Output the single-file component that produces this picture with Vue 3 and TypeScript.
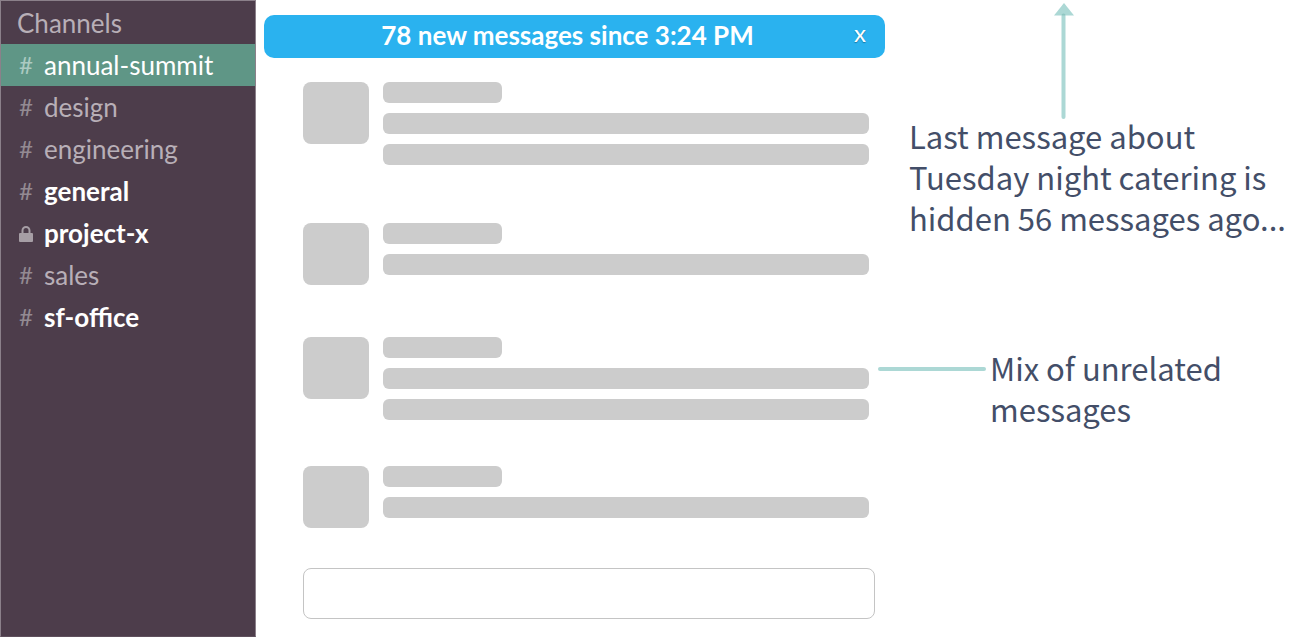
<script setup lang="ts">
import { ref } from 'vue'

interface Channel {
  name: string
  locked?: boolean
  unread?: boolean
}

interface Message {
  id: number
  lines: number
}

const channels: Channel[] = [
  { name: 'annual-summit' },
  { name: 'design' },
  { name: 'engineering' },
  { name: 'general', unread: true },
  { name: 'project-x', unread: true, locked: true },
  { name: 'sales' },
  { name: 'sf-office', unread: true },
]

const messages: Message[] = [
  { id: 1, lines: 2 },
  { id: 2, lines: 1 },
  { id: 3, lines: 2 },
  { id: 4, lines: 1 },
]

const active = ref('annual-summit')
const bannerOpen = ref(true)
const draft = ref('')
</script>

<template>
  <div class="page">
    <nav class="sidebar" aria-labelledby="channels-title">
      <h2 id="channels-title" class="title">Channels</h2>
      <ul class="channels">
        <li v-for="channel in channels" :key="channel.name">
          <a
            :href="'#' + channel.name"
            class="channel"
            :class="{ active: channel.name === active, unread: channel.unread }"
            @click="active = channel.name"
          >
            <svg v-if="channel.locked" class="lock" viewBox="0 0 14 18" aria-hidden="true">
              <path d="M3.5 10V6.5a3.5 3.5 0 0 1 7 0V10" fill="none" stroke="currentColor" stroke-width="2" />
              <rect x="0" y="9" width="14" height="9" rx="1" fill="currentColor" />
            </svg>
            <span v-else class="hash">#</span>
            <span class="name">{{ channel.name }}</span>
          </a>
        </li>
      </ul>
    </nav>

    <main class="conversation">
      <div class="banner" :class="{ closed: !bannerOpen }">
        <span class="banner-text">78 new messages since 3:24 PM</span>
        <button class="close" type="button" aria-label="Dismiss" @click="bannerOpen = false">x</button>
      </div>

      <div class="messages">
        <article v-for="message in messages" :key="message.id" class="message">
          <div class="avatar"></div>
          <div class="bars">
            <div class="bar short"></div>
            <div v-for="line in message.lines" :key="line" class="bar"></div>
          </div>
        </article>
      </div>

      <input v-model="draft" class="composer" type="text" aria-label="Message" />
    </main>

    <aside class="notes">
      <div class="note-hidden">
        <svg class="arrow" viewBox="0 0 20 116" aria-hidden="true">
          <path d="M10 0 20 12.5H0Z" fill="#acd8d5" />
          <path d="M9.5 13.5V114" stroke="#acd8d5" stroke-width="4" stroke-linecap="round" />
          <path d="M7.5 12.5v-.5a2 1.5 0 0 1 4 0v.5Z" fill="#8fc6c2" />
        </svg>
        <p class="note">Last message about<br />Tuesday night catering is<br />hidden 56 messages ago...</p>
      </div>
      <div class="note-mix">
        <svg class="pointer" viewBox="0 0 108 4" aria-hidden="true">
          <path d="M2 2H106" stroke="#acd8d5" stroke-width="4" stroke-linecap="round" />
        </svg>
        <p class="note">Mix of unrelated<br />messages</p>
      </div>
    </aside>
  </div>
</template>

<style>
body {
  margin: 0;
  background: #fff;
}
</style>

<style scoped>
.page {
  display: grid;
  grid-template-columns: 256px minmax(0, 1fr) 415px;
  min-height: 100vh;
  font-family: Lato, sans-serif;
}

.sidebar {
  box-sizing: border-box;
  border: 1px solid #8b808a;
  border-bottom-color: #5f505d;
  background: #4d3d4b;
  color: #b8afb7;
  font-size: 26px;
  line-height: 42px;
}

.title {
  margin: 0;
  padding: 1px 0 0 16px;
  height: 42px;
  font-size: 26px;
  font-weight: 400;
}

.channels {
  margin: 0;
  padding: 0;
  list-style: none;
}

.channel {
  display: flex;
  align-items: center;
  gap: 10px;
  height: 42px;
  padding-left: 18px;
  color: inherit;
  text-decoration: none;
}

.channel.active {
  background: #5f9686;
  color: #fff;
}

.channel.unread {
  color: #fff;
  font-weight: 700;
}

.hash {
  width: 14px;
  color: #938a92;
  font-size: 24px;
  font-weight: 400;
}

.active .hash {
  color: #abcac1;
}

.name {
  padding-left: 1px;
}

.lock {
  width: 14px;
  height: 18px;
  color: #a69ea5;
}

.conversation {
  display: flex;
  flex-direction: column;
}

.banner {
  box-sizing: border-box;
  display: grid;
  grid-template-columns: 36px 1fr 50px;
  align-items: center;
  height: 43px;
  margin: 15px 0 0 8px;
  padding-bottom: 4px;
  border-radius: 10px;
  background: #2ab2ef;
  color: #fff;
}

.banner.closed {
  visibility: hidden;
}

.banner-text {
  grid-column: 2;
  font-size: 26px;
  font-weight: 700;
  line-height: 38px;
  text-align: center;
  white-space: nowrap;
}

.close {
  padding: 0 0 4px;
  border: 0;
  background: none;
  color: #fff;
  font: 24px/30px Lato, sans-serif;
  text-shadow: 0 1px 1px #1679a8;
  cursor: pointer;
}

.messages {
  display: grid;
  grid-template-rows: 141px 114px 129px 102px;
  margin: 24px 16px 0 47px;
}

.message {
  display: flex;
  gap: 14px;
}

.avatar {
  flex: none;
  width: 66px;
  height: 62px;
  border-radius: 8px;
  background: #ccc;
}

.bars {
  display: flex;
  flex: 1;
  flex-direction: column;
  gap: 10px;
}

.bar {
  height: 21px;
  border-radius: 6px;
  background: #ccc;
}

.bar.short {
  width: 119px;
}

.composer {
  box-sizing: border-box;
  height: 51px;
  margin: 0 10px 0 47px;
  padding: 0 14px;
  border: 1px solid #c4c4c4;
  border-radius: 8px;
  background: #fff;
  font: 20px Lato, sans-serif;
}

.note {
  margin: 0;
  color: #434e68;
  font-family: "Noto Sans CJK SC", "Noto Sans", sans-serif;
  font-size: 31px;
  line-height: 41px;
  white-space: nowrap;
}

.note-hidden {
  padding: 3px 0 0 24px;
}

.arrow {
  display: block;
  width: 20px;
  height: 116px;
  margin-left: 145px;
}

.note-hidden .note {
  margin-top: -4px;
}

.note-mix {
  display: flex;
  align-items: flex-start;
  gap: 4px;
  margin: 109px 0 0 -7px;
}

.pointer {
  flex: none;
  width: 108px;
  height: 4px;
  margin-top: 20px;
}
</style>
